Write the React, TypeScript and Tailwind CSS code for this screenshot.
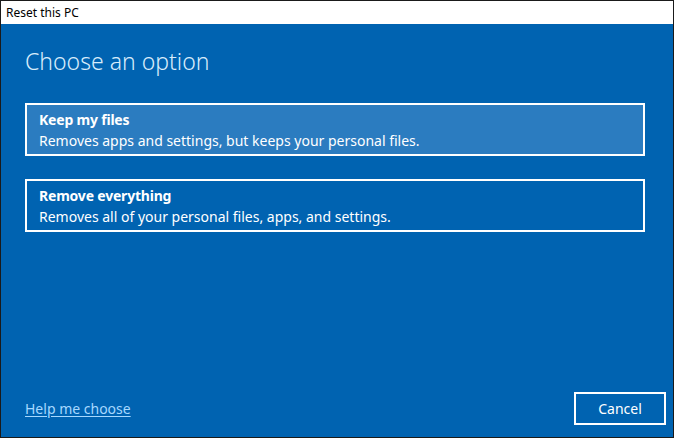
import React from "react";

export default function App() {
  const font = { fontFamily: '"Noto Sans", "Open Sans", sans-serif' };
  return (
    <div className="w-[674px] h-[438px] flex flex-col border border-[#1a1a1a] bg-[#0063b1] overflow-hidden" style={font}>
      <div className="h-[23px] bg-white flex items-center pl-[5px] text-[12px] text-black leading-none shrink-0">
        Reset this PC
      </div>
      <div className="flex-1 flex flex-col px-[24px]">
        <h1 className="mt-[22px] text-[23px] font-light text-[#d8ecfb] leading-[30px]">Choose an option</h1>
        <div className="mt-[27px] flex flex-col gap-[23px] w-[620px]">
          <div className="border-2 border-white bg-[#2b7cc0] px-[12px] pt-[4px] h-[53px]">
            <div className="text-[14px] font-bold text-white leading-[21px] tracking-[-0.2px]">Keep my files</div>
            <div className="text-[14px] text-white leading-[21px]">Removes apps and settings, but keeps your personal files.</div>
          </div>
          <div className="border-2 border-white bg-[#0063b1] px-[12px] pt-[4px] h-[53px]">
            <div className="text-[14px] font-bold text-white leading-[21px] tracking-[-0.2px]">Remove everything</div>
            <div className="text-[14px] text-white leading-[21px]">Removes all of your personal files, apps, and settings.</div>
          </div>
        </div>
        <div className="mt-auto mb-[12px] flex items-center justify-between">
          <a className="text-[14px] text-[#a6d8ff] underline underline-offset-2">Help me choose</a>
          <button className="w-[92px] h-[33px] border-2 border-white text-white text-[14px] mr-[-17px]">Cancel</button>
        </div>
      </div>
    </div>
  );
}
